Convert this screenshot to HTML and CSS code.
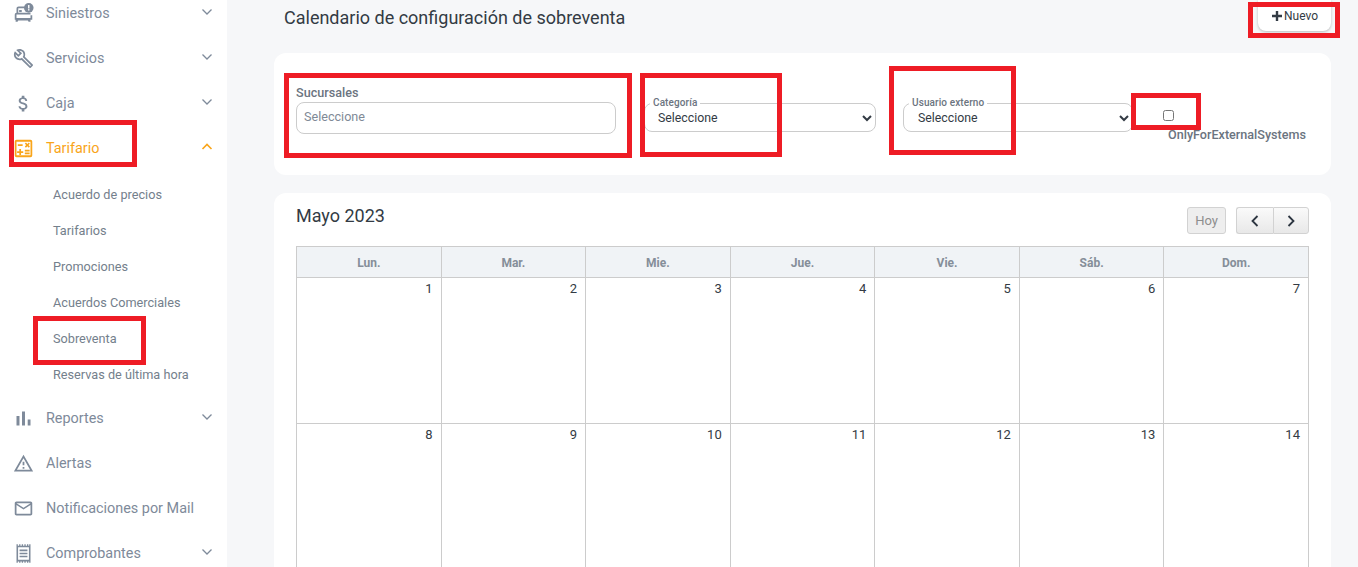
FILE: index.html
```html
<!DOCTYPE html>
<html lang="es">
<head>
<meta charset="utf-8">
<title>Calendario de configuración de sobreventa</title>
<link rel="stylesheet" href="styles.css">
</head>
<body>
<div class="app">
  <aside class="sidebar">
    <nav class="nav">
      <a class="nav-item"><svg class="ico" viewBox="0 0 24 24"><path d="M3 19v2.500h2.200L6 20h11l.8 1.500H20V19zM2 19v-5.500C2 12 3 11 4 11V6.500C4 5 5 4 6.500 4H13v2H6.500c-.3 0-.5.2-.5.5V11h14v2H4v4h16v-3h2v5z"/><rect x="7" y="8" width="3" height="2.400"/><circle cx="18" cy="5.500" r="5.500"/><rect x="17.200" y="2.300" width="1.600" height="4" fill="#fff"/><rect x="17.200" y="7" width="1.600" height="1.600" fill="#fff"/></svg><span class="nav-label">Siniestros</span><svg class="chev" viewBox="0 0 12 8"><path d="M1.500 1.500 6 6l4.500-4.500"/></svg></a>
      <a class="nav-item"><svg class="ico" viewBox="0 0 24 24"><path d="M22.61 18.99l-9.08-9.08c.93-2.34.45-5.1-1.44-7C9.79.61 6.21.4 3.66 2.26L7.5 6.11 6.08 7.52 2.25 3.69C.39 6.23.6 9.82 2.9 12.11c1.86 1.86 4.57 2.35 6.89 1.48l9.11 9.11c.39.39 1.02.39 1.41 0l2.3-2.3c.4-.38.4-1.01 0-1.41zm-3 1.6l-9.46-9.46c-.61.45-1.29.72-2 .82-1.36.2-2.79-.21-3.83-1.25C3.37 9.76 2.93 8.5 3 7.26l3.09 3.09 4.24-4.24-3.09-3.09c1.24-.07 2.49.37 3.44 1.31 1.08 1.08 1.49 2.57 1.24 3.96-.12.71-.42 1.37-.88 1.96l9.45 9.45-.88.88z"/></svg><span class="nav-label">Servicios</span><svg class="chev" viewBox="0 0 12 8"><path d="M1.500 1.500 6 6l4.500-4.500"/></svg></a>
      <a class="nav-item"><svg class="ico" viewBox="0 0 24 24"><path d="M11.8 10.9c-2.27-.59-3-1.2-3-2.15 0-1.09 1.01-1.85 2.7-1.85 1.78 0 2.44.85 2.5 2.1h2.21c-.07-1.72-1.12-3.3-3.21-3.81V3h-3v2.16c-1.94.42-3.5 1.68-3.5 3.61 0 2.31 1.91 3.46 4.7 4.13 2.5.6 3 1.48 3 2.41 0 .69-.49 1.79-2.7 1.79-2.06 0-2.87-.92-2.98-2.1h-2.2c.12 2.19 1.76 3.42 3.68 3.83V21h3v-2.15c1.95-.37 3.5-1.5 3.5-3.55 0-2.84-2.43-3.81-4.7-4.4z"/></svg><span class="nav-label">Caja</span><svg class="chev" viewBox="0 0 12 8"><path d="M1.500 1.500 6 6l4.500-4.500"/></svg></a>
      <a class="nav-item active"><svg class="ico" viewBox="0 0 24 24"><path d="M4 2h16a2 2 0 0 1 2 2v16a2 2 0 0 1-2 2H4a2 2 0 0 1-2-2V4a2 2 0 0 1 2-2zm0 2.200v15.600h16V4.200zM5.500 7h5.500v2H5.500zm8 -.5 1.300-1.300 1.600 1.600 1.600-1.600 1.300 1.300-1.600 1.600 1.600 1.600-1.300 1.300-1.600-1.600-1.600 1.600-1.300-1.300 1.600-1.600zM13.500 13.500H19v2h-5.500zm0 3H19v2h-5.500zM7.200 12.500h2v2.500h2.500v2H9.200v2.500h-2V17H4.700v-2h2.500z"/></svg><span class="nav-label">Tarifario</span><svg class="chev" viewBox="0 0 12 8"><path d="M1.500 6 6 1.500 10.500 6"/></svg></a>
      <ul class="subnav">
        <li>Acuerdo de precios</li>
        <li>Tarifarios</li>
        <li>Promociones</li>
        <li>Acuerdos Comerciales</li>
        <li>Sobreventa</li>
        <li>Reservas de última hora</li>
      </ul>
      <a class="nav-item"><svg class="ico" viewBox="0 0 24 24"><path d="M4 9h3.400v11H4zM10.300 4h3.400v16h-3.400zM16.800 13h3.200v7h-3.200z"/></svg><span class="nav-label">Reportes</span><svg class="chev" viewBox="0 0 12 8"><path d="M1.500 1.500 6 6l4.500-4.500"/></svg></a>
      <a class="nav-item"><svg class="ico" viewBox="0 0 24 24"><path d="M12 5.990L19.530 19H4.470L12 5.990M12 2L1 21h22L12 2zm1 14h-2v2h2v-2zm0-6h-2v4h2v-4z"/></svg><span class="nav-label">Alertas</span></a>
      <a class="nav-item"><svg class="ico" viewBox="0 0 24 24"><path d="M22 6c0-1.100-.9-2-2-2H4c-1.100 0-2 .9-2 2v12c0 1.100.9 2 2 2h16c1.100 0 2-.9 2-2V6zm-2 0l-8 5-8-5h16zm0 12H4V8l8 5 8-5v10z"/></svg><span class="nav-label">Notificaciones por Mail</span></a>
      <a class="nav-item"><svg class="ico" viewBox="0 0 24 24"><path d="M4 3h16v18H4zm1.800 1.800v14.400h12.400V4.800zM7.500 7.500h9v1.800h-9zm0 3.500h9v1.800h-9zm0 3.500h9v1.800h-9zM4 1.500h1.500V3H4zm3 0h1.500V3H7zm3 0h1.500V3H10zm3 0h1.500V3H13zm3 0h1.500V3H16zm2.500 0H20V3h-1.500zM4 21h1.500v1.500H4zm3 0h1.500v1.500H7zm3 0h1.500v1.500H10zm3 0h1.500v1.500H13zm3 0h1.500v1.500H16zm2.500 0H20v1.500h-1.500z"/></svg><span class="nav-label">Comprobantes</span><svg class="chev" viewBox="0 0 12 8"><path d="M1.500 1.500 6 6l4.500-4.500"/></svg></a>
    </nav>
  </aside>

  <main class="main">
    <header class="page-head">
      <h1 class="page-title">Calendario de configuración de sobreventa</h1>
      <button class="btn-new" type="button"><svg class="plus" viewBox="0 0 10 10"><path d="M3.800 0h2.400v3.800H10v2.400H6.200V10H3.800V6.200H0V3.800h3.800z"/></svg>Nuevo</button>
    </header>

    <section class="card filters">
      <div class="field-suc">
        <label class="field-label">Sucursales</label>
        <div class="fake-input">Seleccione</div>
      </div>
      <fieldset class="field-set cat">
        <legend>Categoría</legend>
        <select><option>Seleccione</option></select>
      </fieldset>
      <fieldset class="field-set usr">
        <legend>Usuario externo</legend>
        <select><option>Seleccione</option></select>
      </fieldset>
      <div class="field-check">
        <input type="checkbox" class="check">
        <label class="field-label">OnlyForExternalSystems</label>
      </div>
    </section>

    <section class="card calendar">
      <div class="cal-head">
        <h2 class="cal-title">Mayo 2023</h2>
        <div class="cal-tools">
          <button class="btn-today" type="button">Hoy</button>
          <div class="btn-group">
            <button type="button"><svg viewBox="0 0 10 14"><path d="M7.500 2 2.500 7l5 5"/></svg></button>
            <button type="button"><svg viewBox="0 0 10 14"><path d="M2.500 2l5 5-5 5"/></svg></button>
          </div>
        </div>
      </div>
      <div class="cal-grid">
        <div class="dow">Lun.</div><div class="dow">Mar.</div><div class="dow">Mie.</div><div class="dow">Jue.</div><div class="dow">Vie.</div><div class="dow">Sáb.</div><div class="dow">Dom.</div>
        <div class="day">1</div><div class="day">2</div><div class="day">3</div><div class="day">4</div><div class="day">5</div><div class="day">6</div><div class="day">7</div>
        <div class="day">8</div><div class="day">9</div><div class="day">10</div><div class="day">11</div><div class="day">12</div><div class="day">13</div><div class="day">14</div>
      </div>
    </section>
  </main>
</div>

<div class="mark m-new"></div>
<div class="mark m-suc"></div>
<div class="mark m-cat"></div>
<div class="mark m-usr"></div>
<div class="mark m-chk"></div>
<div class="mark m-tar"></div>
<div class="mark m-sob"></div>
</body>
</html>
```
FILE: styles.css
```css
* { box-sizing: border-box; }
html, body { height: 100%; }
body {
  margin: 0;
  overflow: hidden;
  background: #f6f7f9;
  font-family: Roboto, "Liberation Sans", sans-serif;
  color: #333;
}
.app { display: flex; height: 567px; overflow: hidden; }

.sidebar { width: 227px; flex: none; background: #fff; overflow: hidden; }
.nav { margin-top: -9px; }
.nav-item {
  display: flex;
  align-items: center;
  height: 45px;
  padding: 0 14px 0 13px;
  color: #7e8a9a;
  font-size: 14.400px;
}
.nav-item .ico { width: 21px; height: 21px; flex: none; margin-top: -1px; fill: #7e8a9a; }
.nav-label { margin-left: 12px; flex: 1; }
.chev { width: 12px; height: 8px; margin-top: -4px; fill: none; stroke: #7e8a9a; stroke-width: 1.300; }
.nav-item.active { color: #f9a51a; }
.nav-item.active .ico { fill: #f9a51a; }
.nav-item.active .chev { stroke: #f9a51a; stroke-width: 1.600; }
.subnav { list-style: none; margin: 0; padding: 6px 0 3px 53px; }
.subnav li { height: 36px; line-height: 36px; font-size: 12.700px; color: #74808c; }

.main { flex: none; width: 1057px; margin-left: 47px; display: flex; flex-direction: column; }
.page-head { flex: none; height: 53px; display: flex; justify-content: space-between; align-items: flex-start; padding-left: 10px; }
.page-title { margin: 7px 0 0; font-size: 18px; font-weight: 400; line-height: 22px; color: #333b44; }
.btn-new {
  width: 73px; height: 31px; margin-top: 0;
  display: flex; align-items: center; justify-content: center; gap: 2px;
  padding: 0 0 0 1px;
  border: 0; border-radius: 0 0 8px 8px;
  background: #fff; box-shadow: 0 1px 3px rgba(0,0,0,.25);
  font: 12px Roboto, sans-serif; color: #333b44;
}
.plus { width: 10px; height: 10px; fill: #333b44; }

.card { background: #fff; border-radius: 12px; flex: none; }
.filters { height: 122px; display: flex; align-items: flex-start; padding: 0 0 0 22px; }
.field-suc { width: 320px; margin-top: 32px; }
.field-label { display: block; font-size: 12.600px; font-weight: 500; color: #6b7480; line-height: 15px; }
.fake-input {
  height: 32px; margin-top: 2px; padding-left: 7px;
  border: 1px solid #ccc; border-radius: 8px;
  font-size: 12.600px; line-height: 27px; color: #7f8a96;
}
.field-set {
  margin: 44px 0 0 28px; padding: 0; min-width: 0;
  height: 35px;
  border: 1px solid #ccc; border-radius: 8px;
}
.field-set.cat { width: 232px; }
.field-set.usr { width: 230px; margin-left: 27px; }
.field-set legend { margin-left: 5px; padding: 0 3px; font-size: 10px; font-weight: 500; line-height: 12px; color: #6b7480; letter-spacing: .1px; }
.field-set select {
  display: block; width: 100%; height: 18px; margin: 0;
  padding: 0 0 0 9px;
  border: 0; outline: 0; background: transparent;
  font: 12.300px Roboto, sans-serif; color: #333b44;
}
.field-set.usr select { padding-left: 10px; }
.field-check { margin: 57px 0 0 35px; }
.check { display: block; width: 11px; height: 11px; margin: 0 0 0 -5px; }
.field-check .field-label { margin-top: 6px; white-space: nowrap; }

.calendar { margin-top: 18px; height: 400px; padding: 0 22px; }
.cal-head { height: 53px; display: flex; justify-content: space-between; }
.cal-title { margin: 12px 0 0; font-size: 18px; font-weight: 400; line-height: 22px; color: #333b44; }
.cal-tools { display: flex; gap: 10px; margin-top: 14px; }
.btn-today, .btn-group button {
  height: 27px; padding: 0;
  border: 1px solid #d2d2d2; border-radius: 3px;
  font: 13px Roboto, sans-serif;
}
.btn-today { width: 39px; background: #eee; color: #8d8d8d; }
.btn-group { display: flex; }
.btn-group button {
  width: 36.500px; display: flex; align-items: center; justify-content: center;
  background: linear-gradient(#fafafa, #e8e8e8);
}
.btn-group button:first-child { border-radius: 3px 0 0 3px; border-right: 0; }
.btn-group button:last-child { border-radius: 0 3px 3px 0; }
.btn-group svg { width: 10px; height: 14px; fill: none; stroke: #2c3540; stroke-width: 1.800; }

.cal-grid {
  display: grid;
  grid-template-columns: repeat(7, 1fr);
  grid-template-rows: 31px 146px 146px;
  border-top: 1px solid #ccc; border-left: 1px solid #ccc;
}
.dow, .day { border-right: 1px solid #ccc; border-bottom: 1px solid #ccc; font-size: 12px; }
.dow { background: #f0f3f6; text-align: center; font-weight: 700; padding-top: 1px; line-height: 30px; color: #858e99; }
.day { text-align: right; padding: 3px 8px 0 0; font-size: 13px; line-height: 16px; color: #333b44; }

.mark { position: absolute; border: 5px solid #ee1c25; }
.m-new { left: 1248px; top: 2px; width: 92px; height: 36px; }
.m-suc { left: 284px; top: 73px; width: 348px; height: 85px; }
.m-cat { left: 640px; top: 73px; width: 142px; height: 84px; }
.m-usr { left: 889px; top: 66px; width: 127px; height: 89px; }
.m-chk { left: 1131px; top: 93px; width: 70px; height: 37px; }
.m-tar { left: 9px; top: 120px; width: 128px; height: 47px; }
.m-sob { left: 33px; top: 316px; width: 113px; height: 49px; }
```
